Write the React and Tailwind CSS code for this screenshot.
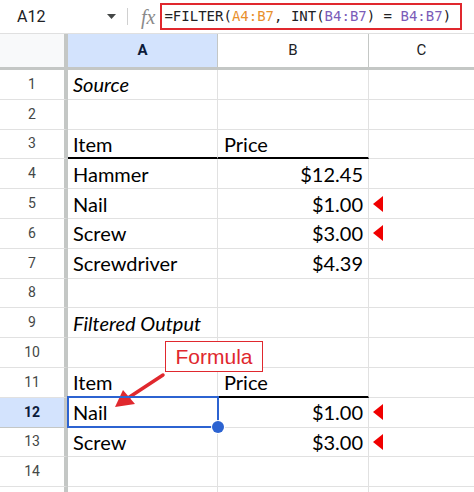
import React from "react";

const ROWS = [
  { n: 1, a: "Source", aItalic: true },
  { n: 2 },
  { n: 3, a: "Item", b: "Price", bLeft: true, thick: true },
  { n: 4, a: "Hammer", b: "$12.45" },
  { n: 5, a: "Nail", b: "$1.00", tri: true },
  { n: 6, a: "Screw", b: "$3.00", tri: true },
  { n: 7, a: "Screwdriver", b: "$4.39" },
  { n: 8 },
  { n: 9, a: "Filtered Output", aItalic: true },
  { n: 10 },
  { n: 11, a: "Item", b: "Price", bLeft: true, thick: true },
  { n: 12, a: "Nail", b: "$1.00", tri: true, sel: true },
  { n: 13, a: "Screw", b: "$3.00", tri: true },
  { n: 14 },
  { n: 15, hide: true },
];

function Tri() {
  return (
    <svg width="10" height="16" viewBox="0 0 10 16" className="ml-[4px]">
      <polygon points="0,8 10,0 10,16" fill="#f00000" />
    </svg>
  );
}

export default function App() {
  return (
    <div className="relative w-[474px] h-[492px] overflow-hidden bg-white">
      {/* Formula bar */}
      <div className="flex items-center h-[34px] border-b border-[#e0e0e0] font-['Roboto',sans-serif]">
        <div className="w-[127px] flex items-center h-full">
          <span className="ml-[17px] text-[16px] text-[#202124]">A12</span>
          <svg width="9" height="5" viewBox="0 0 9 5" className="ml-[62px]">
            <polygon points="0,0 9,0 4.5,5" fill="#444746" />
          </svg>
        </div>
        <div className="w-px h-[17px] bg-[#d0d0d0]" />
        <span className="ml-[13px] text-[20px] italic text-[#8a8a8a] font-['Liberation_Serif',serif] leading-none">
          fx
        </span>
        <div className="ml-[5px] w-[302px] h-[27px] border-2 border-[#e0282e] flex items-center pl-[2px] font-['DejaVu_Sans_Mono',monospace] text-[14px] text-[#202124] whitespace-pre">
          <span>=FILTER(</span>
          <span className="text-[#e8912d]">A4:B7</span>
          <span>, INT(</span>
          <span className="text-[#7b5cb8]">B4:B7</span>
          <span>) = </span>
          <span className="text-[#7b5cb8]">B4:B7</span>
          <span>)</span>
        </div>
      </div>

      {/* Column header */}
      <div className="flex h-[36px] border-b-[3px] border-[#c4c7c5] font-['Roboto',sans-serif] text-[15px] text-[#202124]">
        <div className="w-[68px] border-r-[4px] border-[#c4c7c5] bg-[#f8f9fa]" />
        <div className="w-[150px] border-r border-[#c4c7c5] bg-[#d3e3fd] flex items-center justify-center font-bold text-[#0b1b3a]">
          A
        </div>
        <div className="w-[151px] border-r border-[#c4c7c5] flex items-center justify-center">B</div>
        <div className="flex-1 flex items-center justify-center">C</div>
      </div>

      {/* Rows */}
      {ROWS.map((r) => (
        <div key={r.n} className="flex h-[29.8px] font-['Lato',sans-serif] text-[20px] text-black">
          <div
            className={
              "w-[68px] border-r-[4px] border-[#c4c7c5] border-b flex items-center justify-center font-['Roboto',sans-serif] text-[14px] " +
              (r.sel ? "bg-[#d3e3fd] font-bold text-[#0b1b3a] border-b-[#c4c7c5]" : "text-[#444746] border-b-[#e1e1e1]")
            }
          >
            {r.hide ? "" : r.n}
          </div>
          <div
            className={
              "relative w-[150px] border-r border-r-[#e1e1e1] flex items-center pl-[5px] " +
              (r.thick ? "border-b-2 border-b-black" : "border-b border-b-[#e1e1e1]") +
              (r.aItalic ? " italic" : "")
            }
          >
            {r.a}
            {r.sel && (
              <div className="absolute z-10 left-[-1px] top-[-2px] w-[152px] h-[32px] border-2 border-[#2c63d1]">
                <div className="absolute right-[-7px] bottom-[-7px] w-[12px] h-[12px] rounded-full bg-[#2c63d1] ring-1 ring-white" />
              </div>
            )}
          </div>
          <div
            className={
              "w-[151px] border-r border-r-[#e1e1e1] flex items-center pr-[5px] " +
              (r.bLeft ? "justify-start pl-[6px] " : "justify-end ") +
              (r.thick ? "border-b-2 border-b-black" : "border-b border-b-[#e1e1e1]")
            }
          >
            {r.b}
          </div>
          <div className="flex-1 border-b border-b-[#e1e1e1] flex items-center">{r.tri && <Tri />}</div>
        </div>
      ))}

      {/* Annotation */}
      <div className="absolute left-[165px] top-[341px] w-[98px] h-[31px] border border-[#e0282e] bg-white flex items-center justify-center font-['Liberation_Sans',sans-serif] text-[21px] text-[#e0282e]">
        Formula
      </div>
      <svg className="absolute left-0 top-0" width="474" height="492" viewBox="0 0 474 492">
        <line x1="163" y1="375" x2="128" y2="398" stroke="#e0282e" strokeWidth="3.5" strokeLinecap="round" />
        <polygon points="115,407 123,390 135,404" fill="#e0282e" />
      </svg>
    </div>
  );
}
